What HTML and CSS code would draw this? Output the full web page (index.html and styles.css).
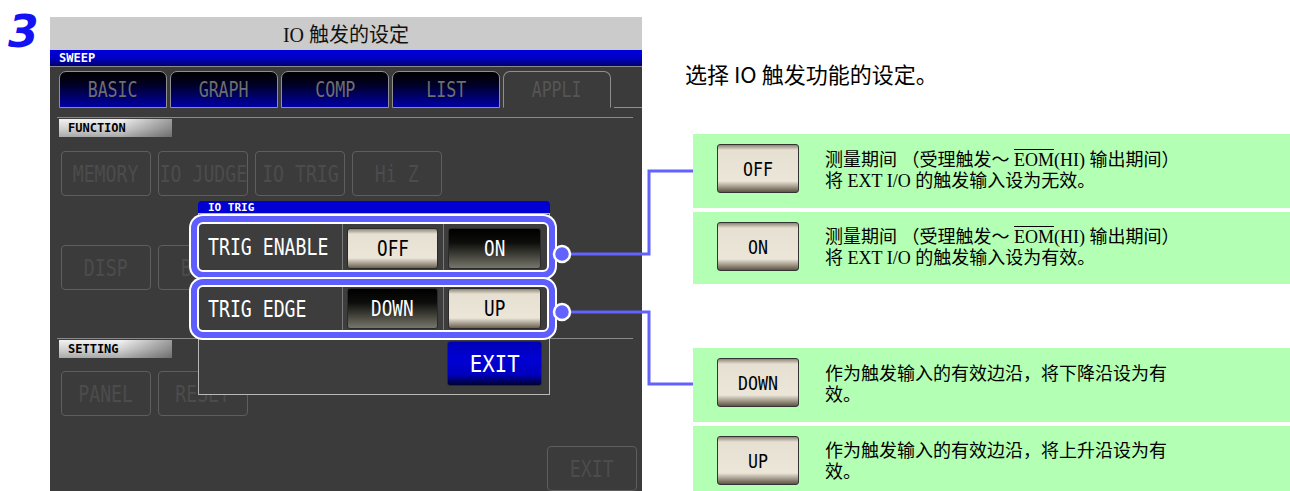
FILE: index.html
```html
<!DOCTYPE html>
<html>
  <head>
    <title>IO 触发的设定</title>
    <meta charset="UTF-8"/>
    <link rel="stylesheet" href="styles.css">
  </head>
  <body>
    <div class="page">
      <div class="step">3</div>

      <div class="screen">
        <div class="title">IO 触发的设定</div>
        <div class="mode">SWEEP</div>
        <div class="tabs">
          <div class="tab"><span class="t">BASIC</span></div>
          <div class="tab"><span class="t">GRAPH</span></div>
          <div class="tab"><span class="t">COMP</span></div>
          <div class="tab"><span class="t">LIST</span></div>
          <div class="tab active"><span class="t">APPLI</span></div>
          <div class="tab-fill"></div>
        </div>

        <div class="group">
          <div class="group-label">FUNCTION</div>
          <div class="keys">
            <div class="key"><span class="t">MEMORY</span></div>
            <div class="key"><span class="t">IO JUDGE</span></div>
            <div class="key"><span class="t">IO TRIG</span></div>
            <div class="key"><span class="t">Hi Z</span></div>
            <div class="key"><span class="t">DISP</span></div>
            <div class="key"><span class="t">BEEP</span></div>
          </div>
        </div>

        <div class="group setting">
          <div class="group-label">SETTING</div>
          <div class="keys">
            <div class="key"><span class="t">PANEL</span></div>
            <div class="key"><span class="t">RESET</span></div>
          </div>
        </div>

        <div class="exit-row">
          <div class="key"><span class="t">EXIT</span></div>
        </div>

        <!-- popup window over the menu -->
        <div class="dialog">
          <div class="dlg-head">IO TRIG</div>
          <div class="dlg-body">
            <div class="row first">
              <div class="row-name"><span class="t">TRIG ENABLE</span></div>
              <div class="row-cell"><div class="sw lit"><span class="t">OFF</span></div></div>
              <div class="row-cell wide"><div class="sw dark"><span class="t">ON</span></div></div>
            </div>
            <div class="row second">
              <div class="row-name"><span class="t">TRIG EDGE</span></div>
              <div class="row-cell"><div class="sw dark"><span class="t">DOWN</span></div></div>
              <div class="row-cell wide"><div class="sw lit"><span class="t">UP</span></div></div>
            </div>
            <div class="dlg-foot">
              <div class="sw blue"><span class="t">EXIT</span></div>
            </div>
          </div>
        </div>
      </div>

      <div class="notes">
        <p class="lead">选择 IO 触发功能的设定。</p>
        <div class="note-group">
          <div class="note">
            <div class="pic"><span class="t">OFF</span></div>
            <p>测量期间 （受理触发～ <span class="ovl">EOM</span>(HI) 输出期间）<br>将 EXT I/O 的触发输入设为无效。</p>
          </div>
          <div class="note short">
            <div class="pic"><span class="t">ON</span></div>
            <p>测量期间 （受理触发～ <span class="ovl">EOM</span>(HI) 输出期间）<br>将 EXT I/O 的触发输入设为有效。</p>
          </div>
        </div>
        <div class="note-group second">
          <div class="note">
            <div class="pic"><span class="t">DOWN</span></div>
            <p>作为触发输入的有效边沿，将下降沿设为有<br>效。</p>
          </div>
          <div class="note short">
            <div class="pic"><span class="t">UP</span></div>
            <p>作为触发输入的有效边沿，将上升沿设为有<br>效。</p>
          </div>
        </div>
      </div>

      <svg class="callouts" width="1290" height="491" viewBox="0 0 1290 491">
        <path d="M568 254 H649 V171 H693" />
        <path d="M568 312 H649 V384 H693" />
        <circle cx="562" cy="254" r="8" />
        <circle cx="562" cy="312" r="8" />
      </svg>
    </div>
  </body>
</html>
```

FILE: styles.css
```css
body {
  margin: 0;
  background-color: white;
  font-family: "Liberation Sans", "Noto Sans CJK SC", sans-serif;
}
.page {
  position: relative;
  display: flex;
  align-items: flex-start;
  width: 1290px;
  height: 491px;
  overflow: hidden;
}
.step {
  width: 50px;
  box-sizing: border-box;
  padding: 10px 0 0 8px;
  font-family: "DejaVu Sans", sans-serif;
  font-weight: bold;
  font-style: italic;
  font-size: 44px;
  line-height: 44px;
  color: #1212f2;
}

/* device lettering: narrow fixed-pitch */
.t {
  display: inline-block;
  white-space: nowrap;
  transform: scaleX(0.79);
}

/* instrument screen */
.screen {
  position: relative;
  display: flex;
  flex-direction: column;
  width: 592px;
  height: 474px;
  margin-top: 17px;
  background-color: #3b3b3b;
}
.title {
  display: flex;
  align-items: center;
  justify-content: center;
  height: 37px;
  background-color: #cbcbcb;
  color: #111;
  font-family: "Liberation Serif", "Noto Sans CJK SC", serif;
  font-size: 20px;
}
.mode {
  height: 16px;
  padding-left: 9px;
  border-bottom: 1px solid #8c8c8c;
  background: linear-gradient(#0000dc, #0000c4 50%, #00006c);
  color: white;
  font-family: "DejaVu Sans Mono", monospace;
  font-weight: bold;
  font-size: 12px;
  line-height: 16px;
}
.tabs {
  display: flex;
  gap: 3px;
  padding: 4px 0 0 9px;
}
.tab {
  display: flex;
  align-items: center;
  justify-content: center;
  width: 108px;
  height: 37px;
  box-sizing: border-box;
  border: 1px solid #8f8f8f;
  border-radius: 7px 7px 0 0;
  background: linear-gradient(#000 0%, #000024 35%, #0000a6 100%);
  color: #6e6e6e;
  font-family: "DejaVu Sans Mono", monospace;
  font-size: 21px;
}
.tab.active {
  border-bottom-color: transparent;
  background: #3b3b3b;
  color: #555;
}
.tab-fill {
  flex: 1;
  border-bottom: 1px solid #8f8f8f;
}
.group {
  margin: 9px 9px 0 7px;
  border-top: 1px solid #8a8a8a;
}
.group.setting {
  margin-top: 48px;
}
.group-label {
  width: 113px;
  height: 18px;
  margin: 1px 0 0 2px;
  padding-left: 9px;
  box-sizing: border-box;
  background: linear-gradient(to right, rgba(0,0,0,0) 55%, rgba(0,0,0,0.35)), linear-gradient(#f2f2f2, #cfcfcf 55%, #a8a8a8);
  color: black;
  font-family: "DejaVu Sans Mono", monospace;
  font-weight: bold;
  font-size: 12px;
  line-height: 18px;
}
.keys {
  display: grid;
  grid-template-columns: repeat(4, 90px);
  column-gap: 7px;
  row-gap: 49px;
  padding: 14px 0 0 4px;
}
.setting .keys {
  padding-top: 13px;
}
.key {
  display: flex;
  align-items: center;
  justify-content: center;
  width: 90px;
  height: 45px;
  box-sizing: border-box;
  border: 1px solid #5e5e5e;
  border-radius: 4px;
  color: #4c4c4c;
  font-family: "DejaVu Sans Mono", monospace;
  font-size: 23px;
}
.exit-row {
  display: flex;
  justify-content: flex-end;
  margin: 30px 5px 0 0;
}

/* IO TRIG popup */
.dialog {
  position: absolute;
  left: 148px;
  top: 184px;
  width: 352px;
}
.dlg-head {
  height: 12px;
  padding-left: 10px;
  border-radius: 4px 4px 0 0;
  background-color: #0000d2;
  color: white;
  font-family: "DejaVu Sans Mono", monospace;
  font-weight: bold;
  font-size: 11px;
  line-height: 13px;
}
.dlg-body {
  display: flex;
  flex-direction: column;
  height: 182px;
  box-sizing: border-box;
  padding-top: 8px;
  border: 1px solid #b8b8b8;
  background-color: #3d3d3d;
}
.row {
  display: flex;
  width: 352px;
  height: 50px;
  margin-left: -2px;
  box-sizing: border-box;
  border: 2px solid white;
  border-radius: 6px;
  background-color: #3d3d3d;
  box-shadow: 0 0 0 6px #5e5eff, 0 0 0 8px white;
}
.row.second {
  height: 47px;
  margin-top: 13px;
}
.row-name {
  display: flex;
  align-items: center;
  width: 143px;
  padding-left: 9px;
  box-sizing: border-box;
  color: white;
  font-family: "DejaVu Sans Mono", monospace;
  font-size: 23px;
}
.row-name .t {
  transform-origin: left center;
}
.row-cell {
  display: flex;
  width: 101px;
  box-sizing: border-box;
  padding: 4px 5px 1px 4px;
  border-left: 1px solid #7a7a7a;
}
.row.second .row-cell {
  padding-top: 1px;
}
.row-cell.wide {
  flex: 1;
  padding-right: 6px;
}
.sw {
  display: flex;
  flex: 1;
  align-items: center;
  justify-content: center;
  border: 1px solid #2a2a2a;
  border-radius: 3px;
  font-family: "DejaVu Sans Mono", monospace;
  font-size: 21px;
}
.sw .t {
  transform: scaleX(0.84);
}
.sw.lit {
  background: linear-gradient(#8e8574 0, #e6e0d2 5px, #ece6d9 calc(100% - 10px), #6a604f 100%);
  color: black;
}
.sw.dark {
  background: linear-gradient(#000 0%, #0d0d0b 35%, #76766a 100%);
  color: white;
}
.sw.blue {
  background: linear-gradient(#0000b8 0%, #0000d4 40%, #0000c0 75%, #000030 100%);
  color: white;
  font-size: 23px;
}
.sw.blue .t {
  transform: scaleX(0.9);
}
.dlg-foot {
  display: flex;
  justify-content: flex-end;
  height: 45px;
  margin: 9px 7px 0 0;
}
.dlg-foot .sw {
  flex: 0 0 93px;
}

/* explanation column */
.notes {
  flex: 1;
  padding-top: 58px;
  margin-left: 51px;
}
.lead {
  margin: 0 0 0 -8px;
  font-family: "Noto Sans CJK SC", sans-serif;
  font-size: 22px;
  line-height: 30px;
  color: black;
}
.note-group {
  display: flex;
  flex-direction: column;
  gap: 4px;
  margin-top: 46px;
}
.note-group.second {
  margin-top: 64px;
}
.note {
  display: flex;
  gap: 26px;
  height: 74px;
  padding-left: 24px;
  background-color: #b3ffb3;
}
.note.short {
  height: 72px;
}
.pic {
  display: flex;
  align-items: center;
  justify-content: center;
  flex: 0 0 82px;
  height: 49px;
  margin-top: 10px;
  box-sizing: border-box;
  border: 1px solid #333;
  border-radius: 3px;
  background: linear-gradient(#8e8574 0, #e6e0d2 5px, #ece6d9 calc(100% - 11px), #5e5443 100%);
  color: black;
  font-family: "DejaVu Sans Mono", monospace;
  font-size: 20px;
}
.pic .t {
  transform: scaleX(0.83);
}
.note p {
  align-self: center;
  margin: 0;
  font-family: "Liberation Serif", "Noto Sans CJK SC", serif;
  font-size: 18px;
  line-height: 21px;
  color: black;
}
.ovl {
  text-decoration: overline;
}

.callouts {
  position: absolute;
  left: 0;
  top: 0;
  pointer-events: none;
}
.callouts path {
  fill: none;
  stroke: #6262ff;
  stroke-width: 3;
}
.callouts circle {
  fill: #6262ff;
  stroke: white;
  stroke-width: 2.5;
}
```
